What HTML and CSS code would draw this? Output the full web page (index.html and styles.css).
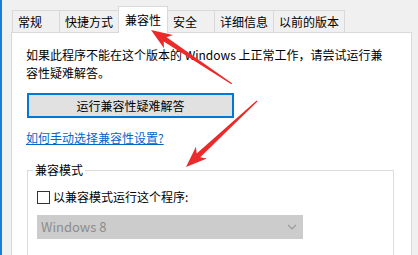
FILE: index.html
```html
<!DOCTYPE html>
<html lang="zh-CN">
<head>
<meta charset="utf-8">
<title>属性 - 兼容性</title>
<link rel="stylesheet" href="styles.css">
</head>
<body>
<div class="window">
  <div class="edge"></div>
  <div class="dialog">
    <div class="tabs">
      <div class="tab">常规</div>
      <div class="tab">快捷方式</div>
      <div class="tab active">兼容性</div>
      <div class="tab">安全</div>
      <div class="tab">详细信息</div>
      <div class="tab">以前的版本</div>
    </div>
    <div class="panel">
      <p class="intro">如果此程序不能在这个版本的 Windows 上正常工作，请尝试运行兼<br>容性疑难解答。</p>
      <button class="btn" type="button">运行兼容性疑难解答</button>
      <a class="link" href="#">如何手动选择兼容性设置?</a>
      <fieldset class="group">
        <legend>兼容模式</legend>
        <label class="check"><span class="box"></span>以兼容模式运行这个程序:</label>
        <div class="select"><span>Windows 8</span>
          <svg width="10" height="6" viewBox="0 0 10 6"><path d="M1 1 L5 5 L9 1" fill="none" stroke="#9a9a9a" stroke-width="1.2"/></svg>
        </div>
      </fieldset>
    </div>
  </div>
  <svg class="arrows" width="418" height="255" viewBox="0 0 418 255">
    <g fill="#ec2a2a">
      <polygon transform="translate(151 30) rotate(213.7)" points="0,0 -21,-8 -17,-2.6 -97,-0.6 -97,0.6 -17,2.6 -21,8"/>
      <polygon transform="translate(186 167) rotate(137.1)" points="0,0 -21,-8 -17,-2.6 -97,-0.6 -97,0.6 -17,2.6 -21,8"/>
    </g>
  </svg>
</div>
</body>
</html>
```
FILE: styles.css
```css
html, body {
  margin: 0;
  padding: 0;
}
body {
  width: 418px;
  height: 255px;
  overflow: hidden;
  font-family: "Noto Sans CJK SC", "Noto Sans", sans-serif;
  font-size: 12px;
  color: #000;
}
.window {
  position: relative;
  display: flex;
  height: 255px;
  background: #f0f0f0;
}
.edge {
  width: 2px;
  background: #1a7fd4;
}
.dialog {
  flex: 1;
  display: flex;
  flex-direction: column;
  padding: 6px 6px 0 9px;
}
.tabs {
  display: flex;
  align-items: flex-end;
  height: 26px;
  padding-left: 2px;
  position: relative;
  z-index: 1;
}
.tab {
  box-sizing: border-box;
  height: 22px;
  min-width: 48px;
  padding: 0 5px;
  margin-left: -1px;
  display: flex;
  align-items: center;
  border: 1px solid #d9d9d9;
  border-bottom: 0;
  background: #f0f0f0;
  line-height: 18px;
  white-space: nowrap;
}
.tab.active {
  height: 27px;
  padding: 0 6px;
  margin-bottom: -1px;
  background: #fff;
  position: relative;
  z-index: 2;
  align-items: flex-start;
  padding-top: 4px;
}
.panel {
  flex: 1;
  background: #fff;
  border: 1px solid #d9d9d9;
  border-bottom: 0;
  padding: 13px 0 0 14px;
  line-height: 18px;
  overflow: hidden;
}
.intro {
  margin: 0;
}
.btn {
  display: block;
  box-sizing: border-box;
  margin: 11px 0 0 1px;
  width: 207px;
  height: 25px;
  border: 2px solid #0078d7;
  background: #e1e1e1;
  font: inherit;
  color: #000;
  padding: 0;
}
.link {
  display: inline-block;
  margin-top: 11px;
  color: #0066cc;
  text-decoration: underline;
}
.group {
  box-sizing: border-box;
  width: 367px;
  min-height: 120px;
  margin: 14px 0 0 1px;
  padding: 0 0 0 9px;
  border: 1px solid #dcdcdc;
  border-bottom: 0;
}
.group legend {
  padding: 0 2px;
  margin-left: -4px;
  line-height: 18px;
}
.check {
  display: flex;
  align-items: center;
  height: 18px;
  margin-top: 9px;
}
.box {
  box-sizing: border-box;
  width: 13px;
  height: 13px;
  border: 1px solid #333;
  margin-right: 3px;
  background: #fff;
}
.select {
  box-sizing: border-box;
  margin-top: 9px;
  width: 266px;
  height: 24px;
  background: #cccccc;
  color: #8c8c8c;
  font-size: 13px;
  display: flex;
  align-items: center;
  justify-content: space-between;
  padding: 0 6px 0 4px;
}
.arrows {
  position: absolute;
  left: 0;
  top: 0;
  pointer-events: none;
  z-index: 5;
}
```
